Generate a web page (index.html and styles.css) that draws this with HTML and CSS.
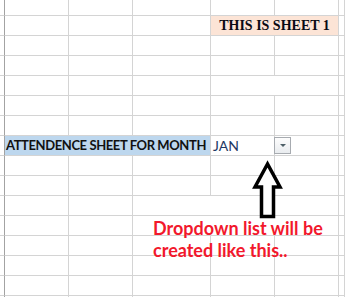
FILE: index.html
```html
<!DOCTYPE html>
<html lang="en">
<head>
  <meta charset="UTF-8">
  <title>Sheet 1</title>
  <link rel="stylesheet" href="styles.css">
</head>
<body>
  <div class="sheet" id="sheet">
    <svg class="arrow" width="345" height="297" viewBox="0 0 345 297">
      <polygon points="267.5,164 255,187 261.5,187 261.5,216.5 273.5,216.5 273.5,187 280,187" />
    </svg>
    <div class="note">Dropdown list will be<br>created like this..</div>
  </div>

  <script>
    const COLS = 7;
    const ROWS = 16;
    const cells = {
      "1,4": { span: 2, cls: "title", text: "THIS IS SHEET 1" },
      "4,4": { span: 2 },
      "7,1": { span: 3, cls: "label", text: "ATTENDENCE SHEET FOR MONTH" },
      "7,4": { cls: "month", text: "JAN" },
      "7,5": { cls: "drop", html: '<span class="drop-btn"><span class="drop-tri"></span></span>' },
      "10,3": { span: 3 },
      "11,3": { span: 3 }
    };

    const sheet = document.getElementById("sheet");
    for (let r = 0; r < ROWS; r++) {
      for (let c = 0; c < COLS; c++) {
        const spec = cells[r + "," + c] || {};
        const cell = document.createElement("div");
        cell.className = "cell";
        if (c === 0) cell.classList.add("gutter");
        if (spec.span) cell.classList.add("span" + spec.span);
        if (spec.cls) cell.classList.add(spec.cls);
        if (spec.text) cell.textContent = spec.text;
        if (spec.html) cell.innerHTML = spec.html;
        sheet.appendChild(cell);
        c += (spec.span || 1) - 1;
      }
    }
  </script>
</body>
</html>
```

FILE: styles.css
```css
body { margin: 0; overflow: hidden; background: #fff; }
.sheet { position: relative; height: 297px; overflow: hidden; display: grid; grid-template-columns: 5px 64px 64px 78px 64px 64px 1fr; grid-template-rows: 16px; grid-auto-rows: 20px; font-family: Lato, "Liberation Sans", sans-serif; }
.cell { box-sizing: border-box; min-width: 0; white-space: nowrap; overflow: hidden; border-right: 1px solid #d4d4d4; border-bottom: 1px solid #d4d4d4; }
.gutter { border-right-color: #a3a3a3; }
.span2 { grid-column: span 2; }
.span3 { grid-column: span 3; }
.title { background: #fce4d6; font-family: "Liberation Serif", serif; font-weight: bold; font-size: 14px; line-height: 19px; text-align: center; color: #0a0a14; }
.label { background: #bdd7ee; font-weight: bold; font-size: 13px; letter-spacing: -0.4px; line-height: 19px; padding-left: 1px; color: #111; }
.month { font-size: 14px; line-height: 19px; padding-left: 2px; color: #1f3864; }
.drop { display: flex; align-items: flex-start; overflow: visible; }
.drop-btn { box-sizing: border-box; width: 17px; height: 17px; margin: 1px 0 0 -1px; border: 1px solid #a7abb0; background: linear-gradient(#fdfdfd, #e9ecef); display: flex; align-items: center; justify-content: center; }
.drop-tri { width: 0; height: 0; border-left: 3px solid transparent; border-right: 3px solid transparent; border-top: 3px solid #4e6068; }
.arrow { position: absolute; left: 0; top: 0; pointer-events: none; }
.arrow polygon { fill: #fff; stroke: #000; stroke-width: 3.5; stroke-linejoin: miter; }
.note { position: absolute; left: 153px; top: 217px; font-weight: bold; font-size: 18px; line-height: 22px; color: #f2182c; white-space: nowrap; }
```
